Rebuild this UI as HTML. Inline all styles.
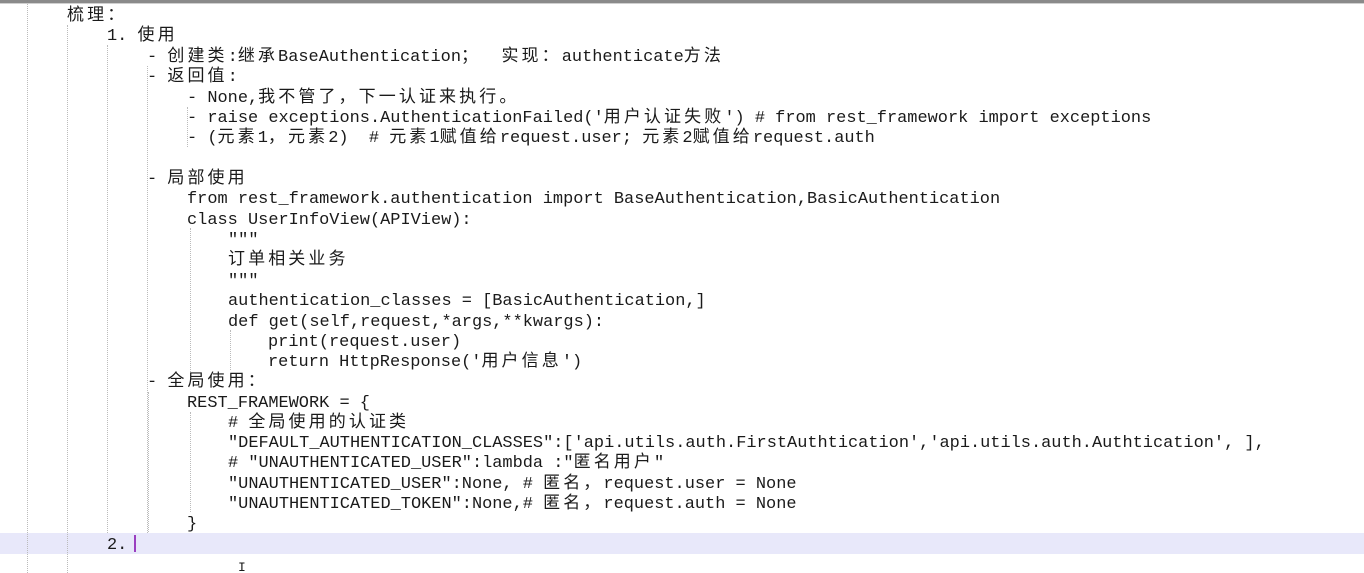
<!DOCTYPE html>
<html><head><meta charset="utf-8"><style>
html,body{margin:0;padding:0;background:#fff;width:1364px;height:573px;overflow:hidden;position:relative}
.top{position:absolute;left:0;top:0;width:1364px;height:3px;background:#8a8a8a}
.top2{position:absolute;left:0;top:3px;width:1364px;height:1px;background:#d0d0d0}
.hl{position:absolute;left:0;top:533px;width:1364px;height:21px;background:#e8e8fa}
.cur{position:absolute;left:134px;top:535px;width:2px;height:17px;background:#9a3fc0}
.w{position:absolute;left:0;top:3px;width:1364px;height:570px}
.l{position:absolute;white-space:pre;font-family:"Liberation Mono","Noto Sans CJK SC",monospace;font-size:16.95px;line-height:20px;height:20px;color:#1a1a1a}
.c{font-family:"Noto Sans CJK SC","WenQuanYi Zen Hei",sans-serif;font-size:17px;letter-spacing:3.1px;line-height:0}
.g{position:absolute;width:0;border-left:1px dotted #bbb}
</style></head><body>
<div class="top"></div><div class="top2"></div>
<div class="hl"></div><div class="cur"></div>
<div class="g" style="left:27px;top:4px;height:569px"></div>
<div class="g" style="left:67px;top:25px;height:548px"></div>
<div class="g" style="left:107px;top:45px;height:488px"></div>
<div class="g" style="left:147px;top:66px;height:467px"></div>
<div class="g" style="left:187px;top:107px;height:40px"></div>
<div class="g" style="left:148px;top:392px;height:140px"></div>
<div class="g" style="left:190px;top:412px;height:100px"></div>
<div class="g" style="left:190px;top:228px;height:150px"></div>
<div class="g" style="left:230px;top:330px;height:40px"></div>
<div class="w">
<div class="l" style="left:67px;top:4px"><span class="c">梳理：</span></div>
<div class="l" style="left:107px;top:24px">1. <span class="c">使用</span></div>
<div class="l" style="left:147px;top:45px">- <span class="c">创建类</span>:<span class="c">继承</span>BaseAuthentication<span class="c">；</span>  <span class="c">实现：</span>authenticate<span class="c">方法</span></div>
<div class="l" style="left:147px;top:65px">- <span class="c">返回值</span>:</div>
<div class="l" style="left:187px;top:86px">- None,<span class="c">我不管了，下一认证来执行。</span></div>
<div class="l" style="left:187px;top:106px">- raise exceptions.AuthenticationFailed('<span class="c">用户认证失败</span>') # from rest_framework import exceptions</div>
<div class="l" style="left:187px;top:126px">- (<span class="c">元素</span>1<span class="c">，元素</span>2)  # <span class="c">元素</span>1<span class="c">赋值给</span>request.user; <span class="c">元素</span>2<span class="c">赋值给</span>request.auth</div>
<div class="l" style="left:147px;top:167px">- <span class="c">局部使用</span></div>
<div class="l" style="left:187px;top:187px">from rest_framework.authentication import BaseAuthentication,BasicAuthentication</div>
<div class="l" style="left:187px;top:208px">class UserInfoView(APIView):</div>
<div class="l" style="left:228px;top:228px">"""</div>
<div class="l" style="left:228px;top:248px"><span class="c">订单相关业务</span></div>
<div class="l" style="left:228px;top:269px">"""</div>
<div class="l" style="left:228px;top:289px">authentication_classes = [BasicAuthentication,]</div>
<div class="l" style="left:228px;top:310px">def get(self,request,*args,**kwargs):</div>
<div class="l" style="left:268px;top:330px">print(request.user)</div>
<div class="l" style="left:268px;top:350px">return HttpResponse('<span class="c">用户信息</span>')</div>
<div class="l" style="left:147px;top:370px">- <span class="c">全局使用：</span></div>
<div class="l" style="left:187px;top:391px">REST_FRAMEWORK = {</div>
<div class="l" style="left:228px;top:411px"># <span class="c">全局使用的认证类</span></div>
<div class="l" style="left:228px;top:431px">"DEFAULT_AUTHENTICATION_CLASSES":['api.utils.auth.FirstAuthtication','api.utils.auth.Authtication', ],</div>
<div class="l" style="left:228px;top:451px"># "UNAUTHENTICATED_USER":lambda :"<span class="c">匿名用户</span>"</div>
<div class="l" style="left:228px;top:472px">"UNAUTHENTICATED_USER":None, # <span class="c">匿名，</span>request.user = None</div>
<div class="l" style="left:228px;top:492px">"UNAUTHENTICATED_TOKEN":None,# <span class="c">匿名，</span>request.auth = None</div>
<div class="l" style="left:187px;top:512px">}</div>
<div class="l" style="left:107px;top:533px">2.</div>
<div class="l" style="left:238px;top:555px;font-size:13px">I</div>
</div>
</body></html>
